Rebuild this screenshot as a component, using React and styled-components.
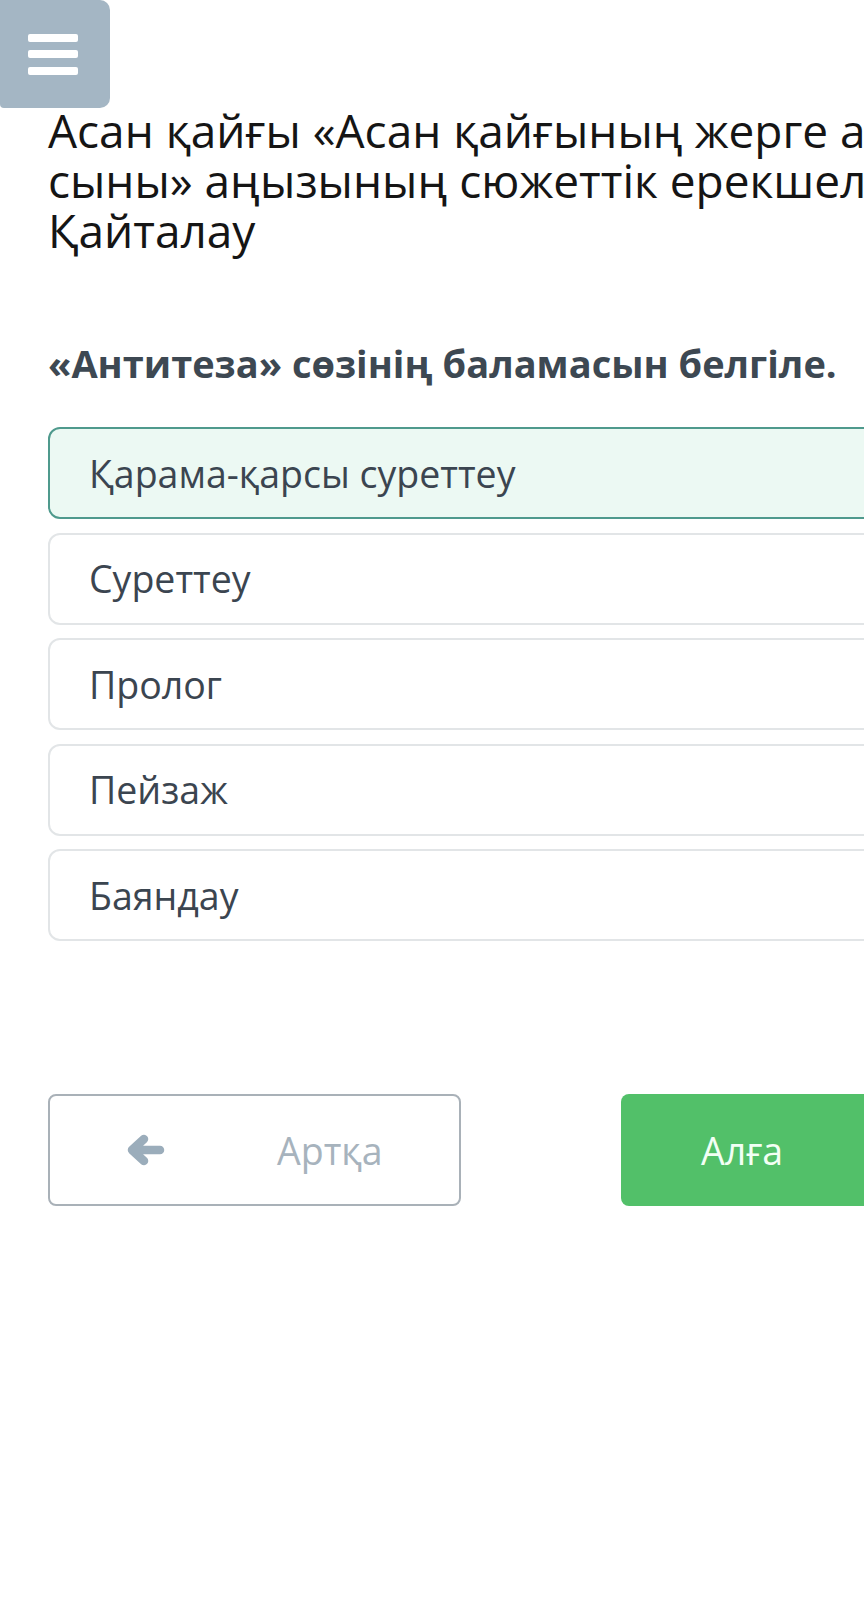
import React from "react";
import styled, { createGlobalStyle } from "styled-components";

const options = [
  "Қарама-қарсы суреттеу",
  "Суреттеу",
  "Пролог",
  "Пейзаж",
  "Баяндау",
];

const App = () => {
  const [selected, setSelected] = React.useState(0);

  return (
    <>
      <GlobalStyle />
      <Page>
        <MenuButton aria-label="menu">
          <MenuLine />
          <MenuLine />
          <MenuLine />
        </MenuButton>
        <Content>
          <Title>
            Асан қайғы «Асан қайғының жерге айтқан
            <br />
            сыны» аңызының сюжеттік ерекшеліктері.
            <br />
            Қайталау
          </Title>
          <Question>«Антитеза» сөзінің баламасын белгіле.</Question>
          <OptionList>
            {options.map((text, i) => (
              <Option
                key={text}
                $active={i === selected}
                onClick={() => setSelected(i)}
              >
                {text}
              </Option>
            ))}
          </OptionList>
          <Nav>
            <BackButton>
              <ArrowIcon width="40" height="32" viewBox="0 0 40 32">
                <path
                  d="M35 16H11M19 5L7 16l12 11"
                  fill="none"
                  stroke="#9badbb"
                  strokeWidth="8.5"
                  strokeLinecap="round"
                  strokeLinejoin="round"
                />
              </ArrowIcon>
              <BackLabel>Артқа</BackLabel>
            </BackButton>
            <NextButton>Алға</NextButton>
          </Nav>
        </Content>
      </Page>
    </>
  );
};

const GlobalStyle = createGlobalStyle`
  html, body {
    margin: 0;
    background: #ffffff;
    overflow-x: hidden;
  }
  body {
    font-family: "Open Sans", "Noto Sans", sans-serif;
  }
`;

const Page = styled.div`
  width: 864px;
  min-height: 1603px;
  overflow: hidden;
`;

const MenuButton = styled.div`
  width: 110px;
  height: 108px;
  background: #a4b6c4;
  border-radius: 0 10px 10px 4px;
  display: flex;
  flex-direction: column;
  align-items: center;
  justify-content: center;
  gap: 8.5px;
  padding-right: 4px;
  box-sizing: border-box;
`;

const MenuLine = styled.span`
  display: block;
  width: 50px;
  height: 8px;
  border-radius: 2px;
  background: #ffffff;
`;

const Content = styled.div`
  padding-left: 48px;
  width: 1100px;
`;

const Title = styled.h1`
  margin: -3px 0 0;
  font-size: 46px;
  line-height: 50px;
  font-weight: 400;
  color: #151515;
  white-space: nowrap;
`;

const Question = styled.div`
  margin-top: 86px;
  font-size: 38px;
  line-height: 44px;
  font-weight: 700;
  color: #3d4852;
  white-space: nowrap;
`;

const OptionList = styled.div`
  margin-top: 42px;
  display: flex;
  flex-direction: column;
  gap: 13.5px;
`;

const Option = styled.div`
  height: 92px;
  box-sizing: border-box;
  display: flex;
  align-items: center;
  padding-left: 39px;
  border: 2px solid ${(p) => (p.$active ? "#4f9a8d" : "#e2e5e7")};
  background: ${(p) => (p.$active ? "#ecf9f3" : "#ffffff")};
  border-radius: 12px;
  font-size: 37.5px;
  color: #3b4550;
  cursor: pointer;
`;

const Nav = styled.div`
  margin-top: 153px;
  display: flex;
  gap: 160px;
`;

const BaseButton = styled.div`
  width: 413px;
  height: 112px;
  box-sizing: border-box;
  display: flex;
  align-items: center;
  border-radius: 8px;
  font-size: 37.5px;
  cursor: pointer;
`;

const BackButton = styled(BaseButton)`
  padding-left: 75px;
  border: 2px solid #a9b1b8;
  background: #ffffff;
  color: #a7b3bd;
`;

const ArrowIcon = styled.svg`
  flex: none;
`;

const BackLabel = styled.span`
  margin-left: 112px;
`;

const NextButton = styled(BaseButton)`
  padding-left: 80px;
  background: #52c069;
  color: #f2fff4;
`;

export default App;
